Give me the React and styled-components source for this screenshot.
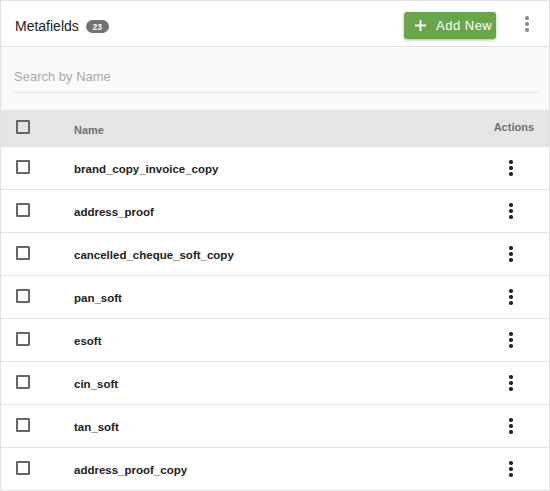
import React from 'react';
import styled, { createGlobalStyle } from 'styled-components';

const GlobalStyle = createGlobalStyle`
  html, body {
    margin: 0;
    padding: 0;
    background: #fff;
  }
  body {
    font-family: "Liberation Sans", Arial, Helvetica, sans-serif;
  }
`;

const Card = styled.div`
  width: 550px;
  box-sizing: border-box;
  border: 1px solid #e2e2e2;
  border-bottom: none;
  background: #fff;
`;

const Header = styled.div`
  display: flex;
  align-items: center;
  height: 46px;
  padding: 0 20px 0 14px;
  border-bottom: 1px solid #e2e2e2;
  box-sizing: border-box;
`;

const Title = styled.span`
  font-size: 14px;
  color: #222;
  margin-top: 4px;
`;

const Badge = styled.span`
  display: inline-flex;
  align-items: center;
  justify-content: center;
  margin-left: 7px;
  margin-top: 6px;
  width: 23px;
  height: 13px;
  border-radius: 7px;
  background: #737373;
  color: #fff;
  font-size: 8.5px;
  font-weight: 700;
`;

const Spacer = styled.div`
  flex: 1;
`;

const AddButton = styled.button`
  display: flex;
  align-items: center;
  gap: 10px;
  height: 27px;
  width: 92px;
  padding: 0 0 0 11px;
  margin-top: 4px;
  border: none;
  border-radius: 3px;
  background: #6aa54c;
  color: #fff;
  font-family: inherit;
  font-size: 13px;
  letter-spacing: 0.5px;
  box-shadow: 0 1px 3px rgba(0, 0, 0, 0.3);
  cursor: pointer;
`;

const Kebab = styled.div`
  display: flex;
  flex-direction: column;
  align-items: center;
  gap: ${p => p.gap}px;
  width: ${p => p.width}px;
  span {
    width: ${p => p.dot}px;
    height: ${p => p.dot}px;
    border-radius: 50%;
    background: ${p => p.color};
  }
`;

const HeaderKebab = styled.div`
  margin-left: 29px;
  margin-top: 1px;
`;

const SearchArea = styled.div`
  background: #fafafa;
  padding: 18px 10px 18px 12px;
  height: 63px;
  box-sizing: border-box;
`;

const SearchInput = styled.input`
  display: block;
  width: 100%;
  box-sizing: border-box;
  border: none;
  border-bottom: 1px solid #dedede;
  background: transparent;
  padding: 4px 1px 8px;
  font-family: inherit;
  font-size: 13px;
  color: #333;
  outline: none;
  &::placeholder {
    color: #a9a9a9;
  }
`;

const Row = styled.div`
  display: grid;
  grid-template-columns: 58px 1fr 80px;
  align-items: center;
  height: ${p => (p.head ? 37 : 43)}px;
  box-sizing: border-box;
  padding-left: 15px;
  background: ${p => (p.head ? '#e5e5e5' : '#fff')};
  border-bottom: ${p => (p.head ? 'none' : '1px solid #e2e2e2')};
`;

const Box = styled.span`
  display: block;
  width: 14px;
  height: 14px;
  box-sizing: border-box;
  border: 2px solid #666;
  border-radius: 1px;
  margin-top: ${p => (p.head ? -3 : -2)}px;
`;

const HeadCell = styled.span`
  font-size: 11px;
  font-weight: 700;
  color: #707070;
  margin-top: ${p => (p.right ? -3 : 3)}px;
  text-align: ${p => (p.right ? 'right' : 'left')};
  padding-right: ${p => (p.right ? 15 : 0)}px;
`;

const NameCell = styled.span`
  font-size: 11.5px;
  font-weight: 700;
  color: #222;
  margin-top: 1px;
`;

const ActionCell = styled.div`
  display: flex;
  justify-content: flex-start;
  padding-left: 40px;
`;

const fields = [
  'brand_copy_invoice_copy',
  'address_proof',
  'cancelled_cheque_soft_copy',
  'pan_soft',
  'esoft',
  'cin_soft',
  'tan_soft',
  'address_proof_copy',
];

const Dots = props => (
  <Kebab {...props}>
    <span />
    <span />
    <span />
  </Kebab>
);

const PlusIcon = () => (
  <svg width="11" height="11" viewBox="0 0 11 11">
    <path d="M5.5 0v11M0 5.5h11" stroke="#fff" strokeWidth="1.8" />
  </svg>
);

export default function App() {
  return (
    <>
      <GlobalStyle />
      <Card>
        <Header>
          <Title>Metafields</Title>
          <Badge>23</Badge>
          <Spacer />
          <AddButton>
            <PlusIcon />
            Add New
          </AddButton>
          <HeaderKebab>
            <Dots gap={2.5} dot={3.5} width={4} color="#8a8a8a" />
          </HeaderKebab>
        </Header>
        <SearchArea>
          <SearchInput placeholder="Search by Name" />
        </SearchArea>
        <Row head>
          <Box head />
          <HeadCell>Name</HeadCell>
          <HeadCell right>Actions</HeadCell>
        </Row>
        {fields.map(name => (
          <Row key={name}>
            <Box />
            <NameCell>{name}</NameCell>
            <ActionCell>
              <Dots gap={2.5} dot={3.5} width={4} color="#222" />
            </ActionCell>
          </Row>
        ))}
      </Card>
    </>
  );
}
